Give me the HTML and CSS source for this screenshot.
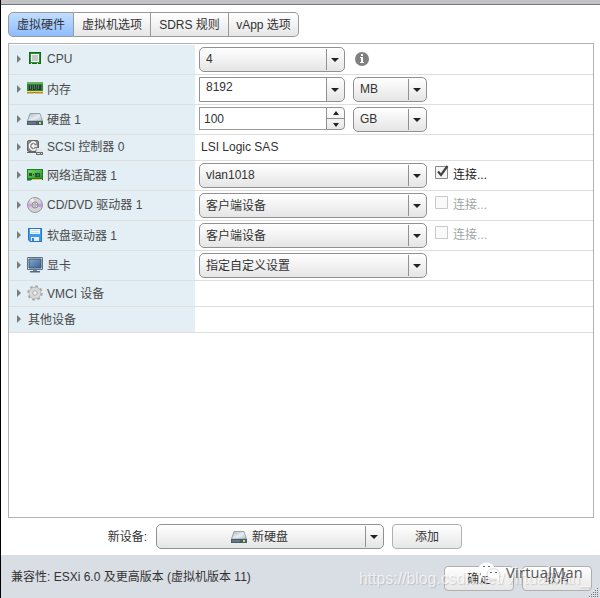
FILE: index.html
```html
<!DOCTYPE html>
<html lang="zh-CN">
<head>
<meta charset="utf-8">
<title>虚拟硬件</title>
<link rel="stylesheet" href="styles.css">
</head>
<body>
<svg class="defs" width="0" height="0">
  <defs>
    <linearGradient id="metal" x1="0" y1="0" x2="1" y2="1"><stop offset="0" stop-color="#a9b4bf"/><stop offset="0.55" stop-color="#e9edf1"/><stop offset="1" stop-color="#aeb8c3"/></linearGradient>
    <linearGradient id="screen" x1="0" y1="0" x2="1" y2="1"><stop offset="0" stop-color="#88aacd"/><stop offset="1" stop-color="#35608f"/></linearGradient>
    <linearGradient id="green" x1="0" y1="0" x2="1" y2="1"><stop offset="0" stop-color="#79d45c"/><stop offset="1" stop-color="#229332"/></linearGradient>
    <symbol id="disk" viewBox="0 0 16 16">
      <path d="M3 2.500h10l2.500 7.500H.5z" fill="url(#metal)" stroke="#8994a0" stroke-width=".8"/>
      <path d="M0 10h16v4H0z" fill="#4d5c6c"/><path d="M1 11h8v2H1z" fill="#66788a"/>
      <path d="M12 11h2v2h-2z" fill="#b4f23a"/>
    </symbol>
  </defs>
</svg>
<div class="dialog">
  <div class="titlebar"></div>
  <nav class="tabs">
    <div class="tab active t1">虚拟硬件</div><div class="tab t2">虚拟机选项</div><div class="tab t3">SDRS 规则</div><div class="tab t4">vApp 选项</div>
  </nav>
  <main class="panel">
    <div class="row">
      <div class="label"><i class="tri"></i><svg class="icon" viewBox="0 0 16 16"><path d="M2 1h12v12H2z" fill="#0f6a1a"/><path d="M3 2h10v10H3z" fill="#2a9632"/><path d="M4 3h8v8H4z" fill="#f2f5f2"/><path d="M5 4h6v6H5z" fill="#c3c9c5"/><path d="M4 12h1v1H4zM10 12h1v1h-1z" fill="#d8e8d8"/></svg><span>CPU</span></div>
      <div class="value"><div class="combo w146"><span>4</span><b></b></div><svg class="info" viewBox="0 0 14 14"><circle cx="7" cy="7" r="7" fill="#808080"/><path d="M6 2h2v2H6zM5 5h3v5h1v1H5v-1h1V6H5z" fill="#fff"/></svg></div>
    </div>
    <div class="row">
      <div class="label cjk"><i class="tri"></i><svg class="icon" viewBox="0 0 16 16"><path d="M0 1h16v11H0z" fill="#278831"/><path d="M0 1h16v2H0z" fill="#62b45a"/><path d="M2 4h3v5H2zM6 4h3v5H6zM10 4h4v5h-4z" fill="#303536"/><path d="M3 4h1v4H3zM7 4h1v4H7zM11 4h1v4h-1z" fill="#667075"/><path d="M0 10h16v1H0z" fill="#e9d96b"/><path d="M0 11h7v1.500H0zM8 11h8v1.500H8z" fill="#bd8a27"/></svg><span>内存</span></div>
      <div class="value"><div class="combo edit w146"><span>8192</span><b></b></div><div class="combo w74"><span>MB</span><b></b></div></div>
    </div>
    <div class="row">
      <div class="label cjk"><i class="tri"></i><svg class="icon"><use href="#disk"/></svg><span>硬盘 1</span></div>
      <div class="value"><div class="stepper"><span>100</span><div class="steps"><b class="up"></b><b class="down"></b></div></div><div class="combo w74"><span>GB</span><b></b></div></div>
    </div>
    <div class="row short">
      <div class="label"><i class="tri"></i><svg class="icon" viewBox="0 0 16 16"><rect x=".5" y="1.5" width="11" height="11" rx="1.5" fill="#858585" stroke="#666"/><path d="M9 4.500L7.500 3H5L2.500 5.500v3L5 11h2.500L9 9.500M10 7H5M7 5L5 7l2 2" fill="none" stroke="#fff" stroke-width="1.300"/><path d="M0 13h11v1H0z" fill="#666"/><path d="M10 9h4l2 4v3H9v-3z" fill="#e4e6e8"/><path d="M9 13h7v3H9z" fill="#6c7279"/><path d="M10 14h3v1h-3z" fill="#d7dce0"/><path d="M14 14h1v1h-1z" fill="#ffe34e"/></svg><span>SCSI 控制器 0</span></div>
      <div class="value plain">LSI Logic SAS</div>
    </div>
    <div class="row">
      <div class="label cjk"><i class="tri"></i><svg class="icon" viewBox="0 0 16 16"><path d="M0 2h16v11H0z" fill="#168226"/><path d="M1 3h14v8H1z" fill="url(#green)"/><path d="M2 6h3v3H2zM8 6h5v4H8z" fill="#245731"/><path d="M6 7h1v1H6z" fill="#174b22"/><path d="M10 7h2v2h-2z" fill="#57645c"/><path d="M5 12h10v1H5z" fill="#f0c542"/><path d="M0 13h4v1H0z" fill="#8c949b"/></svg><span>网络适配器 1</span></div>
      <div class="value"><div class="combo w228"><span>vlan1018</span><b></b></div><div class="check on"><svg class="box" viewBox="0 0 15 14"><path d="M.5 1.5h12v12H.5z" fill="#f5f5f5" stroke="#888"/><path d="M3 6.500l3 3.500L12.500 1" fill="none" stroke="#444" stroke-width="2.200"/></svg><span>连接...</span></div></div>
    </div>
    <div class="row">
      <div class="label"><i class="tri"></i><svg class="icon" viewBox="0 0 16 16"><circle cx="8" cy="8" r="7.500" fill="#d3d2d6" stroke="#9a979c"/><path d="M8 8L1 6v5z" fill="#cda6dc"/><path d="M8 8l7-2v5z" fill="#bd9dde"/><path d="M8 8L3 3l3-2z" fill="#f1eee7"/><circle cx="8" cy="8" r="3" fill="#e8e8e8" stroke="#89868d"/><circle cx="8" cy="8" r="1.300" fill="#fff" stroke="#77747c" stroke-width=".8"/></svg><span>CD/DVD 驱动器 1</span></div>
      <div class="value"><div class="combo cjk w228"><span>客户端设备</span><b></b></div><div class="check"><svg class="box" viewBox="0 0 15 14"><path d="M.5 1.5h12v12H.5z" fill="#fafafa" stroke="#c9c9c9"/></svg><span>连接...</span></div></div>
    </div>
    <div class="row">
      <div class="label cjk"><i class="tri"></i><svg class="icon" viewBox="0 0 16 16"><path d="M1 1h14v14H3l-2-2z" fill="#2476cc"/><path d="M2 2h12v12H3l-1-1z" fill="#3c9df0"/><path d="M3 2h10v5H3z" fill="#f7fbff"/><path d="M4 3h8v1H4zM4 5h8v1H4z" fill="#bdddf5"/><path d="M4 10h8v4H4z" fill="#e8edf1"/><path d="M5 11h2v3H5z" fill="#3d83ca"/></svg><span>软盘驱动器 1</span></div>
      <div class="value"><div class="combo cjk w228"><span>客户端设备</span><b></b></div><div class="check"><svg class="box" viewBox="0 0 15 14"><path d="M.5 1.5h12v12H.5z" fill="#fafafa" stroke="#c9c9c9"/></svg><span>连接...</span></div></div>
    </div>
    <div class="row">
      <div class="label cjk"><i class="tri"></i><svg class="icon" viewBox="0 0 16 16"><path d="M.5.5h15v12H.5z" fill="#dbe4ed" stroke="#617386"/><path d="M2 2h12v9H2z" fill="url(#screen)" stroke="#3b5878"/><path d="M6 13h4v1H6z" fill="#75869a"/><path d="M3 14h10v1.500H3z" fill="#4e6988"/></svg><span>显卡</span></div>
      <div class="value"><div class="combo cjk w228"><span>指定自定义设置</span><b></b></div></div>
    </div>
    <div class="row short">
      <div class="label cjk"><i class="tri"></i><svg class="icon" viewBox="0 0 16 16"><circle cx="8" cy="8" r="6.600" fill="none" stroke="#aaa" stroke-width="2.400" stroke-dasharray="2.700 2.480"/><circle cx="8" cy="8" r="4.200" fill="none" stroke="#b0b0b0" stroke-width="4"/><circle cx="8" cy="8" r="4" fill="none" stroke="#d9d9d9" stroke-width="3.200"/><circle cx="8" cy="8" r="2.200" fill="#edf3f6" stroke="#a5a5a5" stroke-width=".8"/></svg><span>VMCI 设备</span></div>
      <div class="value"></div>
    </div>
    <div class="row short">
      <div class="label cjk other"><i class="tri"></i><span>其他设备</span></div>
      <div class="value"></div>
    </div>
  </main>
  <div class="newdev">
    <span class="caption">新设备:</span>
    <div class="combo w228 device"><span><svg class="icon"><use href="#disk"/></svg>新硬盘</span><b></b></div>
    <div class="btn">添加</div>
  </div>
  <footer class="footer">
    <span class="compat">兼容性: ESXi 6.0 及更高版本 (虚拟机版本 11)</span>
    <div class="btn">确定</div><div class="btn">取消</div>
  </footer>
  <div class="url">https://blog.csdn.net/VirtualMan_</div>
  <svg class="wechat" viewBox="0 0 24 20"><ellipse cx="8.500" cy="7" rx="8" ry="6.500" fill="#fff"/><path d="M3 11l-1 5 5-3z" fill="#fff"/><ellipse cx="15.500" cy="12" rx="6.500" ry="5.300" fill="#fff" stroke="#ccc" stroke-width=".7"/><path d="M18 16l3 3v-5z" fill="#fff"/><path d="M5 4h2v1H5zM10 4h2v1h-2zM12 10h2v1h-2zM17 10h2v1h-2z" fill="#666"/></svg>
  <div class="brand">VirtualMan</div>
  <svg class="grip" viewBox="0 0 10 10"><path d="M8 0h1v1H8zM6 2h1v1H6zM8 2h1v1H8zM4 4h1v1H4zM6 4h1v1H6zM8 4h1v1H8zM2 6h1v1H2zM4 6h1v1H4zM6 6h1v1H6zM8 6h1v1H8zM0 8h1v1H0zM2 8h1v1H2zM4 8h1v1H4zM6 8h1v1H6zM8 8h1v1H8z" fill="#777"/></svg>
</div>
</body>
</html>
```

FILE: styles.css
```css
* { box-sizing: border-box; }
body { margin: 0; font: 12px/16px "Liberation Sans", "Noto Sans CJK SC", sans-serif; color: #333; background: #fff; overflow: hidden; }
.defs { position: absolute; }
.dialog { position: relative; width: 600px; height: 598px; border-left: 1px solid #000; display: flex; flex-direction: column; }
.titlebar { height: 5px; background: #c1c1c6; border-bottom: 1px solid #777; flex: none; }
.tabs { display: flex; margin: 7px 0 0 7px; height: 25px; flex: none; }
.tab { border: 1px solid #999; border-left-width: 0; background: linear-gradient(#fff, #e6e6e6); text-align: center; line-height: 24px; white-space: nowrap; }
.t1 { width: 66px; border-left-width: 1px; border-radius: 5px 0 0 5px; }
.t2 { width: 77px; }
.t3 { width: 78px; }
.t4 { width: 70px; border-radius: 0 5px 5px 0; }
.tab.active { background: linear-gradient(#c0deff, #8fbcff); }
.panel { margin: 6px 0 0 7px; width: 586px; height: 475px; border: 1px solid #b3b3b3; padding-top: 1px; flex: none; }
.row { display: flex; height: 30px; border-bottom: 1px solid #dedede; }
.row.short { height: 26px; }
.label { width: 186px; background: #e3eff5; display: flex; align-items: center; color: #4a4a4a; white-space: nowrap; padding-bottom: 1px; }
.label.cjk span { margin-top: 2px; }
.tri { width: 0; height: 0; border: 4px solid transparent; border-left: 4px solid #7b7b7b; border-right: 0; margin: 0 6px 0 8px; }
.label .icon { margin-right: 4px; }
.label.other .tri { margin-right: 7px; }
.icon { width: 16px; height: 16px; flex: none; }
.value { flex: 1; display: flex; align-items: flex-start; padding: 2px 0 0 4px; gap: 8px; }
.value.plain { padding: 4px 0 0 6px; }
.combo { display: flex; height: 25px; border: 1px solid #919191; border-radius: 5px; background: linear-gradient(#fff, #e5e5e5); flex: none; }
.combo > span { flex: 1; padding-left: 6px; line-height: 22px; white-space: nowrap; }
.combo.cjk > span { line-height: 24px; }
.combo > b { width: 18px; margin: 1px 0; border-left: 1px solid #919191; display: flex; align-items: center; justify-content: center; }
.combo > b::after { content: ""; border: 4px solid transparent; border-top: 4px solid #222; border-bottom: 0; margin: 1px 1px 0 0; }
.w146 { width: 146px; }
.w74 { width: 74px; }
.w228 { width: 228px; }
.combo.edit { border-radius: 0 5px 5px 0; }
.combo.edit > span { background: #fff; line-height: 18px; }
.combo.edit > b { margin: 0; }
.info { width: 14px; height: 14px; margin: 5px 0 0 2px; }
.stepper { display: flex; width: 146px; height: 23px; }
.stepper > span { flex: 1; border: 1px solid #999; border-right: 0; padding-left: 4px; line-height: 22px; }
.steps { width: 19px; border: 1px solid #919191; border-radius: 0 4px 4px 0; background: linear-gradient(#fff, #e8e8e8); }
.steps b { display: flex; height: 11px; align-items: center; justify-content: center; }
.steps b.up { border-bottom: 1px solid #919191; }
.steps b::after { content: ""; border: 3px solid transparent; }
.steps .up::after { border-bottom: 4px solid #222; border-top: 0; }
.steps .down::after { border-top: 4px solid #222; border-bottom: 0; }
.check { display: flex; color: #9ea5a5; padding-top: 2px; }
.check.on { color: #222; }
.check .box { width: 15px; height: 14px; }
.check span { margin: 2px 0 0 3px; }
.newdev { display: flex; height: 31px; margin-top: 6px; flex: none; }
.caption { width: 155px; padding-right: 9px; text-align: right; line-height: 27px; }
.combo.device > span { display: flex; align-items: center; justify-content: center; gap: 5px; padding: 0 3px 0 0; line-height: 24px; }
.btn { width: 70px; height: 25px; border: 1px solid #b0b0b0; border-radius: 4px; background: linear-gradient(#fff, #e7e7e7); text-align: center; line-height: 25px; flex: none; }
.newdev .btn { margin-left: 8px; }
.footer { height: 43px; background: #d9dde4; display: flex; padding: 11px 8px 0 10px; gap: 8px; flex: none; }
.compat { flex: 1; line-height: 22px; }
.url { position: absolute; left: 358px; top: 569px; font-size: 15.8px; line-height: 20px; color: rgba(255,255,255,.7); text-shadow: 1px 1px 1px rgba(120,120,120,.3); white-space: nowrap; }
.wechat { position: absolute; left: 477px; top: 562px; width: 24px; height: 20px; }
.brand { position: absolute; left: 505px; top: 563px; font-family: "Open Sans", "Noto Sans", sans-serif; font-size: 14.5px; line-height: 20px; letter-spacing: .3px; color: #555; text-shadow: -1px -1px 0 #fff; }
.grip { position: absolute; right: 1px; bottom: 0; width: 10px; height: 10px; }
```
